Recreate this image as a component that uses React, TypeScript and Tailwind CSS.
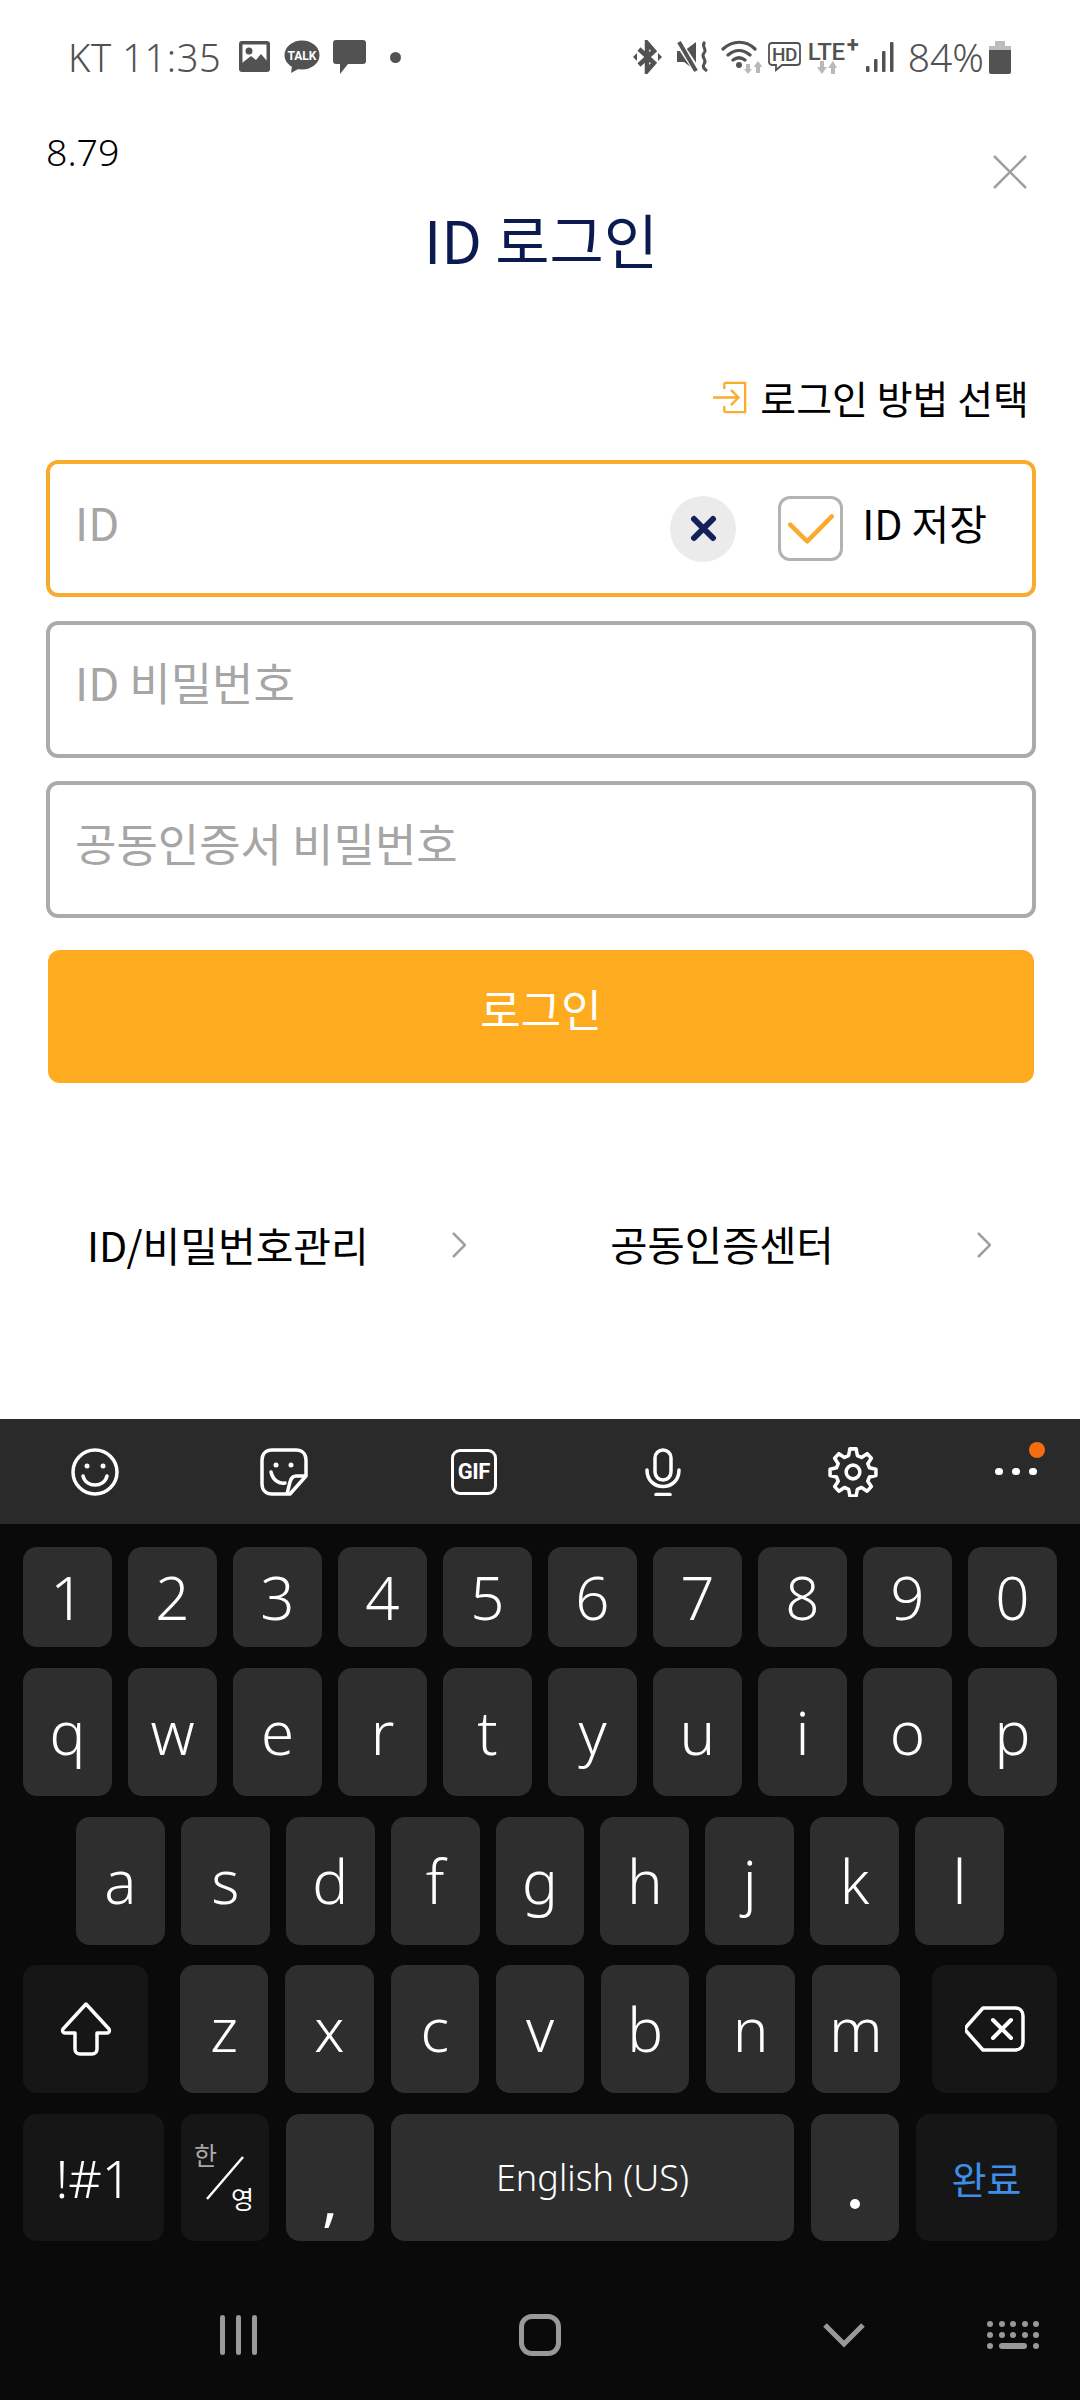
import React from "react";

const KR = "font-['Noto_Sans_CJK_KR','Noto_Sans',sans-serif]";
const KEYFONT = "font-['Noto_Sans','Noto_Sans_CJK_KR',sans-serif]";

function Key({ children, w, dark, className = "" }: { children: React.ReactNode; w?: string; dark?: boolean; className?: string }) {
  return (
    <div
      className={`flex h-full items-center justify-center rounded-[14px] ${w ?? "flex-1"} ${dark ? "bg-[#161616]" : "bg-[#2e2e2e]"} ${className}`}
    >
      {children}
    </div>
  );
}

function StatusBar() {
  return (
    <div className="flex h-[114px] items-center justify-between pl-[68px] pr-[69px] text-[#525252]">
      <div className="flex items-center">
        <span className="text-[38px] font-light tracking-[0.6px] font-['Noto_Sans',sans-serif]">KT 11:35</span>
        <svg className="ml-[18px]" width="32" height="32" viewBox="0 0 32 32">
          <rect width="31" height="31" rx="3" fill="#525252" />
          <rect x="3.5" y="3.5" width="24" height="24" fill="#fff" />
          <circle cx="10" cy="10" r="3.5" fill="#525252" />
          <path d="M3 26 L3 22 L12 15 L17 19 L22 13 L28 20 L28 28 L3 28Z" fill="#525252" />
        </svg>
        <svg className="ml-[13px]" width="36" height="34" viewBox="0 0 36 34">
          <ellipse cx="18" cy="15" rx="17.5" ry="14.5" fill="#525252" />
          <path d="M8 26 L7 33 L16 28Z" fill="#525252" />
          <text x="18" y="20" textAnchor="middle" fontSize="12" fontWeight="700" fill="#fff" fontFamily="Roboto, sans-serif">TALK</text>
        </svg>
        <svg className="ml-[13px]" width="33" height="34" viewBox="0 0 33 34">
          <path d="M3 0H30a3 3 0 0 1 3 3V21a3 3 0 0 1-3 3H15L7 34V24H3a3 3 0 0 1-3-3V3a3 3 0 0 1 3-3Z" fill="#525252" />
        </svg>
        <div className="ml-[24px] h-[11px] w-[11px] rounded-full bg-[#525252]" />
      </div>
      <div className="flex items-center">
        <svg width="29" height="34" viewBox="0 0 29 34" fill="none">
          <path d="M6 9 L21 23 L14 31 V3 L21 11 L6 25" stroke="#525252" strokeWidth="4.500" />
          <path d="M0 17l4-4v8zM29 17l-4-4v8z" fill="#525252" />
        </svg>
        <svg className="ml-[15px]" width="32" height="34" viewBox="0 0 32 34" fill="none">
          <path d="M0 11H7L19 2V31L7 22H0Z" fill="#525252" />
          <path d="M1 2L21 32" stroke="#fff" strokeWidth="7" />
          <path d="M2 2L19 31" stroke="#525252" strokeWidth="4" />
          <path d="M28 2C23 6 31 9 27 13C23 17 31 20 27 24C25 27 27 29 30 31" stroke="#525252" strokeWidth="3" />
        </svg>
        <svg className="ml-[12px]" width="42" height="34" viewBox="0 0 42 34" fill="none">
          <path d="M2 9C12 0 25 0 34 9M7 15C14 9 22 9 29 15M12 20C16 17 20 17 24 20" stroke="#525252" strokeWidth="3.200" strokeLinecap="round" />
          <circle cx="18" cy="25" r="3" fill="#525252" />
          <path d="M25 24h4v5h2l-4 5l-4-5h2zM35 33h4v-6h2.500l-4.500-6l-4.500 6h2.500z" fill="#b9b9b9" />
        </svg>
        <svg className="ml-[5px]" width="33" height="30" viewBox="0 0 33 30" fill="none">
          <path d="M4 1H29a3 3 0 0 1 3 3V20a3 3 0 0 1-3 3H14L8 28V23H4a3 3 0 0 1-3-3V4a3 3 0 0 1 3-3Z" stroke="#525252" strokeWidth="1.800" />
          <text x="16.500" y="19" textAnchor="middle" fontSize="19" fontWeight="500" letterSpacing="-0.5" fill="#525252" fontFamily="Roboto, sans-serif">HD</text>
        </svg>
        <div className="relative ml-[7px] h-[34px] w-[50px]">
          <span className="absolute left-0 top-[-6px] text-[24px] font-medium tracking-[-0.5px] font-['Roboto',sans-serif]">LTE</span>
          <span className="absolute left-[39px] top-[-12px] text-[22px] font-bold font-['Roboto',sans-serif]">+</span>
          <svg className="absolute left-[9px] top-[21px]" width="20" height="14" viewBox="0 0 20 14">
            <path d="M3 0h4v6h3l-5 7l-5-7h3zM14 13h4v-6h2l-4-7l-5 7h3z" fill="#b9b9b9" />
          </svg>
        </div>
        <svg className="ml-[8px]" width="28" height="30" viewBox="0 0 28 30">
          <rect x="0" y="24" width="3.500" height="6" rx="1" fill="#525252" />
          <rect x="8" y="17" width="3.500" height="13" rx="1" fill="#525252" />
          <rect x="16" y="9" width="3.500" height="21" rx="1" fill="#525252" />
          <rect x="24" y="0" width="3.500" height="30" rx="1" fill="#525252" />
        </svg>
        <span className="ml-[14px] text-[39px] font-light font-['Noto_Sans',sans-serif]">84%</span>
        <svg className="ml-[5px]" width="22" height="33" viewBox="0 0 22 33">
          <path d="M6 0h10v5h6v4H0V5h6Z" fill="#bdbdbd" />
          <path d="M0 9h22v22a2 2 0 0 1-2 2H2a2 2 0 0 1-2-2Z" fill="#525252" />
        </svg>
      </div>
    </div>
  );
}

function LoginForm() {
  return (
    <div className={`relative flex-1 bg-white pl-[46px] pr-[44px] ${KR}`}>
      <div className="mt-[16px] text-[37.500px] leading-[44px] text-black font-['Noto_Sans',sans-serif] font-light">8.79</div>
      <svg className="absolute right-[53px] top-[41px]" width="34" height="34" viewBox="0 0 34 34" fill="none">
        <path d="M1 1L33 33M33 1L1 33" stroke="#a0a0a0" strokeWidth="2.500" />
      </svg>

      <h1 className="mt-[25px] text-center text-[59px] leading-[80px] font-normal text-[#0b1a4f]">ID 로그인</h1>

      <div className="mt-[93px] flex items-center justify-end pr-[7px]">
        <svg width="36" height="33" viewBox="0 0 38 34" fill="none" stroke="#f9ad2e" strokeWidth="2.500">
          <path d="M13 1.500H35V32.500H13M13 1.500V8M13 32.500V26" />
          <path d="M1 17H28M20 9L28 17L20 25" />
        </svg>
        <span className="ml-[12px] text-[39px] font-normal leading-[50px] text-black">로그인 방법 선택</span>
      </div>

      <div className="mt-[38px] flex flex-col gap-[23.500px]">
        <div className="flex h-[137px] items-center rounded-[12px] border-[4px] border-[#f9ab2d] pl-[25px]">
          <span className="mb-[14px] flex-1 text-[45px] font-normal text-[#a6a6a6]">ID</span>
          <div className="flex h-[66px] w-[66px] items-center justify-center rounded-full bg-[#ebebeb]">
            <svg width="27" height="27" viewBox="0 0 27 27" fill="none">
              <path d="M4 4L23 23M23 4L4 23" stroke="#14205a" strokeWidth="6" strokeLinecap="round" />
            </svg>
          </div>
          <div className="ml-[42px] flex h-[65px] w-[65px] items-center justify-center rounded-[12px] border-[3px] border-[#b3b3b3]">
            <svg width="46" height="32" viewBox="0 0 46 32" fill="none">
              <path d="M2.200 11.700L19.200 28.300L43.800 3.300" stroke="#f9ab2d" strokeWidth="4.500" strokeLinecap="round" strokeLinejoin="round" />
            </svg>
          </div>
          <span className="mb-[12px] ml-[19px] mr-[45px] text-[41px] font-normal text-black">ID 저장</span>
        </div>
        <div className="flex h-[137px] items-center rounded-[12px] border-[4px] border-[#ababab] pb-[14px] pl-[25px] text-[45px] font-normal text-[#a6a6a6]">
          ID 비밀번호
        </div>
        <div className="flex h-[137px] items-center rounded-[12px] border-[4px] border-[#ababab] pb-[14px] pl-[25px] text-[45px] font-normal text-[#a6a6a6]">
          공동인증서 비밀번호
        </div>
      </div>

      <div className="mx-[2px] mt-[32px] flex h-[133px] items-center justify-center rounded-[12px] bg-[#ffab1f] pb-[17px] text-[44px] font-normal text-white">
        로그인
      </div>

      <div className="mt-[131px] flex items-center text-[41px] font-normal leading-[60px] text-black">
        <span className="ml-[41px]">ID/비밀번호관리</span>
        <svg className="ml-[83px] mt-[2px]" width="14" height="26" viewBox="0 0 14 26" fill="none">
          <path d="M1 1L13 13L1 25" stroke="#a0a0a0" strokeWidth="2.500" />
        </svg>
        <span className="ml-[144.500px] text-[40.500px]">공동인증센터</span>
        <svg className="ml-[143px] mt-[2px]" width="14" height="26" viewBox="0 0 14 26" fill="none">
          <path d="M1 1L13 13L1 25" stroke="#a0a0a0" strokeWidth="2.500" />
        </svg>
      </div>
    </div>
  );
}

function Toolbar() {
  const cell = "flex h-full w-[189.500px] items-center justify-center";
  return (
    <div className="flex h-[105px] items-center bg-[#2a2a2a]">
      <div className={cell}>
        <svg width="48" height="48" viewBox="0 0 48 48" fill="none" stroke="#fff" strokeWidth="3.500">
          <circle cx="24" cy="24" r="22" />
          <path d="M12 28C15 40 33 40 36 28" strokeLinecap="round" />
          <circle cx="16" cy="18" r="2.500" fill="#fff" stroke="none" />
          <circle cx="32" cy="18" r="2.500" fill="#fff" stroke="none" />
        </svg>
      </div>
      <div className={cell}>
        <svg width="48" height="48" viewBox="0 0 48 48" fill="none" stroke="#fff" strokeWidth="3.500" strokeLinejoin="round">
          <path d="M30 46H12C6 46 2 42 2 36V12C2 6 6 2 12 2H36C42 2 46 6 46 12V28Z" />
          <path d="M46 28H36C32 28 31 31 30 34L27 46" />
          <path d="M11 24C13 33 20 36 25 35" strokeLinecap="round" />
          <circle cx="16" cy="17" r="2.500" fill="#fff" stroke="none" />
          <circle cx="31" cy="17" r="2.500" fill="#fff" stroke="none" />
        </svg>
      </div>
      <div className={cell}>
        <div className="flex h-[46px] w-[46px] items-center justify-center rounded-[9px] border-[3.500px] border-white text-[22px] font-bold tracking-[-0.5px] text-white font-['Roboto',sans-serif]">
          GIF
        </div>
      </div>
      <div className={cell}>
        <svg width="36" height="48" viewBox="0 0 36 48" fill="none" stroke="#fff" strokeWidth="3.500" strokeLinecap="round">
          <rect x="10" y="2" width="16" height="30" rx="8" />
          <path d="M2 22C2 44 34 44 34 22" />
          <path d="M11 46.500H25" />
        </svg>
      </div>
      <div className={cell}>
        <svg width="50" height="50" viewBox="0 0 24 24" fill="none" stroke="#fff" strokeWidth="1.700" strokeLinejoin="round">
          <path d="M10.500 1h3l.6 3.200 2 .9 2.700-1.800 2 2.200-1.700 2.600.8 2 3.100.7v3l-3.100.7-.8 2 1.700 2.600-2 2.200-2.700-1.800-2 .9-.6 3.200h-3l-.6-3.200-2-.9-2.700 1.800-2-2.200 1.700-2.600-.8-2-3.100-.7v-3l3.100-.7.8-2-1.700-2.600 2-2.200 2.700 1.800 2-.9z" transform="translate(0 -.1)" />
          <circle cx="12" cy="12" r="3.300" />
        </svg>
      </div>
      <div className="relative flex h-full flex-1 items-center justify-center gap-[9px] pl-[5px]">
        <div className="h-[7px] w-[8px] rounded-full bg-white" />
        <div className="h-[7px] w-[8px] rounded-full bg-white" />
        <div className="h-[7px] w-[8px] rounded-full bg-white" />
        <div className="absolute right-[35px] top-[23px] h-[16px] w-[16px] rounded-full bg-[#f46d0e]" />
      </div>
    </div>
  );
}

function Keyboard() {
  const letter = `text-[60px] font-light text-white ${KEYFONT}`;
  const rowCls = "flex h-[128px] gap-[16px]";
  return (
    <div className={`flex flex-1 flex-col bg-[#0a0a0a] px-[23px] pt-[23px] ${KEYFONT}`}>
      <div className="flex h-[100px] gap-[16px]">
        {"1234567890".split("").map((k) => (
          <Key key={k} className={letter}>{k}</Key>
        ))}
      </div>
      <div className={`mt-[21px] ${rowCls}`}>
        {"qwertyuiop".split("").map((k) => (
          <Key key={k} className={letter}>{k}</Key>
        ))}
      </div>
      <div className={`mt-[21px] px-[53px] ${rowCls}`}>
        {"asdfghjkl".split("").map((k) => (
          <Key key={k} className={letter}>{k}</Key>
        ))}
      </div>
      <div className={`mt-[20px] ${rowCls}`}>
        <Key w="w-[125px]" dark>
          <svg width="52" height="54" viewBox="0 0 52 54" fill="none">
            <path d="M26 2L49 27C50 29 49 31 47 31H37V47C37 50 35 52 32 52H20C17 52 15 50 15 47V31H5C3 31 2 29 3 27Z" stroke="#fff" strokeWidth="3.500" strokeLinejoin="round" />
          </svg>
        </Key>
        <div className="flex flex-1 gap-[17px] pl-[16px] pr-[16px]">
          {"zxcvbnm".split("").map((k) => (
            <Key key={k} className={letter}>{k}</Key>
          ))}
        </div>
        <Key w="w-[125px]" dark>
          <svg width="60" height="46" viewBox="0 0 60 46" fill="none" stroke="#fff" strokeLinejoin="round">
            <path d="M18 2H50C55 2 58 5 58 10V36C58 41 55 44 50 44H18L2 26C0 24 0 22 2 20Z" strokeWidth="3.500" />
            <path d="M28 14L46 32M46 14L28 32" strokeWidth="4" strokeLinecap="round" />
          </svg>
        </Key>
      </div>
      <div className="mt-[21px] flex h-[127px] gap-[17px]">
        <Key w="w-[141px]" dark className="text-[52px] font-light text-white">!#1</Key>
        <Key w="w-[88px]" dark className="relative">
          <span className={`absolute left-[13px] top-[24px] text-[25px] leading-[32px] text-[#a8a8a8] ${KR}`}>한</span>
          <svg className="absolute left-[24px] top-[42px]" width="40" height="44" viewBox="0 0 40 44" fill="none">
            <path d="M38 1L2 43" stroke="#fff" strokeWidth="2.500" />
          </svg>
          <span className={`absolute left-[50px] top-[68px] text-[25px] leading-[32px] text-white ${KR}`}>영</span>
        </Key>
        <Key w="w-[88px]" className="items-end pb-[14px] text-[60px] text-white">
          <span className="leading-[60px]">,</span>
        </Key>
        <Key className="text-[36px] font-light text-white">English (US)</Key>
        <Key w="w-[88px]" className="relative">
          <div className="absolute bottom-[32px] h-[10px] w-[10px] rounded-full bg-white" />
        </Key>
        <Key w="w-[141px]" dark className={`text-[38px] text-[#3f8ee8] ${KR}`}>완료</Key>
      </div>
      <NavBar />
    </div>
  );
}

function NavBar() {
  return (
    <div className="relative mt-[73px] flex h-[42px] items-center">
      <div className="ml-[197px] flex h-[40px] w-[37px] justify-between">
        <div className="h-full w-[5px] rounded-full bg-[#999]" />
        <div className="h-full w-[5px] rounded-full bg-[#999]" />
        <div className="h-full w-[5px] rounded-full bg-[#999]" />
      </div>
      <div className="ml-[262px] h-[42px] w-[42px] rounded-[13px] border-[5px] border-[#999]" />
      <svg className="ml-[262px]" width="42" height="26" viewBox="0 0 42 26" fill="none">
        <path d="M2 3L21 22L40 3" stroke="#999" strokeWidth="5" />
      </svg>
      <div className="ml-[122px] flex w-[52px] flex-col gap-[5px]">
        <div className="flex justify-between">
          {[0, 1, 2, 3, 4].map((i) => <div key={i} className="h-[6px] w-[6px] rounded-full bg-[#999]" />)}
        </div>
        <div className="flex justify-between">
          {[0, 1, 2, 3, 4].map((i) => <div key={i} className="h-[6px] w-[6px] rounded-full bg-[#999]" />)}
        </div>
        <div className="flex items-center justify-between">
          <div className="h-[6px] w-[6px] rounded-full bg-[#999]" />
          <div className="h-[6px] w-[28px] rounded-full bg-[#999]" />
          <div className="h-[6px] w-[6px] rounded-full bg-[#999]" />
        </div>
      </div>
    </div>
  );
}

export default function App() {
  return (
    <div className="flex h-[2400px] w-[1080px] flex-col overflow-hidden bg-white">
      <div className="flex h-[1419px] flex-col">
        <StatusBar />
        <LoginForm />
      </div>
      <Toolbar />
      <Keyboard />
    </div>
  );
}
